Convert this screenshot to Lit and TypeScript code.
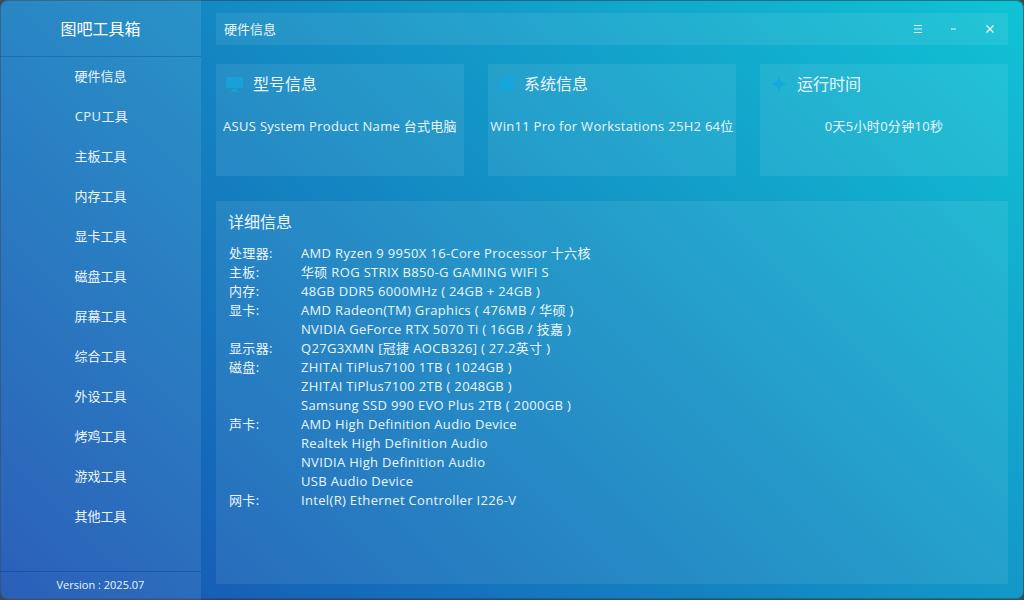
import { LitElement, html, css } from "lit";
import { customElement } from "lit/decorators.js";

const MENU = ["硬件信息","CPU工具","主板工具","内存工具","显卡工具","磁盘工具","屏幕工具","综合工具","外设工具","烤鸡工具","游戏工具","其他工具"];
const ROWS: [string,string][] = [
  ["处理器:","AMD Ryzen 9 9950X 16-Core Processor 十六核"],
  ["主板:","华硕 ROG STRIX B850-G GAMING WIFI S"],
  ["内存:","48GB DDR5 6000MHz ( 24GB + 24GB )"],
  ["显卡:","AMD Radeon(TM) Graphics ( 476MB / 华硕 )"],
  ["","NVIDIA GeForce RTX 5070 Ti ( 16GB / 技嘉 )"],
  ["显示器:","Q27G3XMN [冠捷 AOCB326] ( 27.2英寸 )"],
  ["磁盘:","ZHITAI TiPlus7100 1TB ( 1024GB )"],
  ["","ZHITAI TiPlus7100 2TB ( 2048GB )"],
  ["","Samsung SSD 990 EVO Plus 2TB ( 2000GB )"],
  ["声卡:","AMD High Definition Audio Device"],
  ["","Realtek High Definition Audio"],
  ["","NVIDIA High Definition Audio"],
  ["","USB Audio Device"],
  ["网卡:","Intel(R) Ethernet Controller I226-V"],
];

@customElement("app-root")
export class AppRoot extends LitElement {
  static styles = css`
    :host { display:block; width:1024px; height:600px; background:#3a4a55; overflow:hidden;
      font-family:"Open Sans","Noto Sans CJK SC",sans-serif; color:#eaf6fb; }
    .win { width:1024px; height:600px; border-radius:8px; overflow:hidden; display:flex; box-sizing:border-box;
      background:linear-gradient(45deg,#1750b2 0%,#10c3d4 100%);
      box-shadow:inset 0 0 0 1px rgba(45,60,75,.55), inset 0 -2px 0 rgba(45,60,75,.4); }
    .side { width:201px; flex:none; background:rgba(255,255,255,.09); display:flex; flex-direction:column; }
    .brand { height:56px; flex:none; display:flex; align-items:center; justify-content:center; font-size:16px;
      border-bottom:1px solid rgba(20,90,170,.55); color:#fff; }
    .menu { flex:1; display:flex; flex-direction:column; }
    .item { height:40px; flex:none; display:flex; align-items:center; justify-content:center; font-size:13px; padding-bottom:4px; box-sizing:border-box; }
    .item.latin { letter-spacing:.4px; padding-left:2px; }
    .ver { height:29px; flex:none; border-top:1px solid rgba(20,70,160,.6); display:flex; align-items:center; justify-content:center; font-size:11px; padding-bottom:3px; box-sizing:border-box; }
    .main { flex:1; padding:13px 16px 16px 15px; display:flex; flex-direction:column; min-width:0; }
    .top { height:32px; flex:none; background:rgba(255,255,255,.08); display:flex; align-items:center; padding:0 0 0 8px; font-size:13px; }
    .title { flex:1; padding-bottom:2px; }
    .ctl { width:36px; height:32px; display:flex; align-items:center; justify-content:center; }
    .cards { display:grid; grid-template-columns:repeat(3,248px); gap:24px; margin-top:19px; flex:none; }
    .card { height:112px; background:rgba(255,255,255,.08); box-sizing:border-box; display:flex; flex-direction:column; }
    .chead { height:38px; display:flex; align-items:center; font-size:16px; }
    .ico { width:37px; flex:none; display:flex; padding-left:9px; box-sizing:border-box; padding-top:2px; }
    .sys { width:36px; padding-left:10px; }
    .ico svg { width:20px; height:20px; }
    .cbody { height:46px; display:flex; align-items:center; justify-content:center; font-size:13px; white-space:nowrap; letter-spacing:.29px; }
    .panel { flex:1; margin-top:25px; background:rgba(255,255,255,.08); padding:10px 13px; min-height:0; }
    .ptitle { font-size:16px; height:22px; line-height:22px; margin-bottom:11px; margin-left:-1px; }
    .row { display:flex; height:19px; line-height:19px; font-size:13px; white-space:nowrap; letter-spacing:.33px; }
    .k { width:72px; flex:none; }
  `;

  render() {
    return html`<div class="win">
      <aside class="side">
        <div class="brand">图吧工具箱</div>
        <nav class="menu">${MENU.map(m => html`<div class="item ${m.startsWith("CPU") ? "latin" : ""}">${m}</div>`)}</nav>
        <div class="ver">Version : 2025.07</div>
      </aside>
      <main class="main">
        <header class="top">
          <div class="title">硬件信息</div>
          <div class="ctl"><svg width="10" height="8" viewBox="0 0 10 8"><path d="M1 .5h8M1 4h8M1 7.5h8" stroke="#eaf6fb" fill="none"/></svg></div>
          <div class="ctl"><svg width="8" height="2" viewBox="0 0 8 2"><path d="M1 1h5" stroke="#eaf6fb" fill="none"/></svg></div>
          <div class="ctl"><svg width="10" height="10" viewBox="0 0 10 10"><path d="M1.500 1.500l7 7M8.500 1.500l-7 7" stroke="#f4fbfd" stroke-width="1.400" fill="none"/></svg></div>
        </header>
        <section class="cards">
          <div class="card">
            <div class="chead">
              <span class="ico"><svg viewBox="0 0 20 20"><path fill="#14a6de" fill-opacity=".75" d="M1 3h17v11H1zM7 15h5v2h2v1H5v-1h2z"/></svg></span>
              <span>型号信息</span>
            </div>
            <div class="cbody">ASUS System Product Name 台式电脑</div>
          </div>
          <div class="card">
            <div class="chead">
              <span class="ico sys"><svg viewBox="0 0 20 20"><path fill="#14a6de" d="M1 4.500l6.500-1v6H1zM8.500 3.300L15.500 2v7.500h-7zM1 10.500h6.500v6L1 15.500zM8.500 10.500h7V18l-7-1.300z"/></svg></span>
              <span>系统信息</span>
            </div>
            <div class="cbody">Win11 Pro for Workstations 25H2 64位</div>
          </div>
          <div class="card">
            <div class="chead">
              <span class="ico"><svg viewBox="0 0 20 20"><path fill="#14a9dc" d="M10 1c.6 5.500 1.800 7.800 8 9-6.200 1.200-7.400 3.500-8 9-.6-5.500-1.800-7.800-8-9 6.200-1.200 7.400-3.500 8-9z"/></svg></span>
              <span>运行时间</span>
            </div>
            <div class="cbody">0天5小时0分钟10秒</div>
          </div>
        </section>
        <section class="panel">
          <div class="ptitle">详细信息</div>
          ${ROWS.map(([k,v]) => html`<div class="row"><span class="k">${k}</span><span>${v}</span></div>`)}
        </section>
      </main>
    </div>`;
  }
}
